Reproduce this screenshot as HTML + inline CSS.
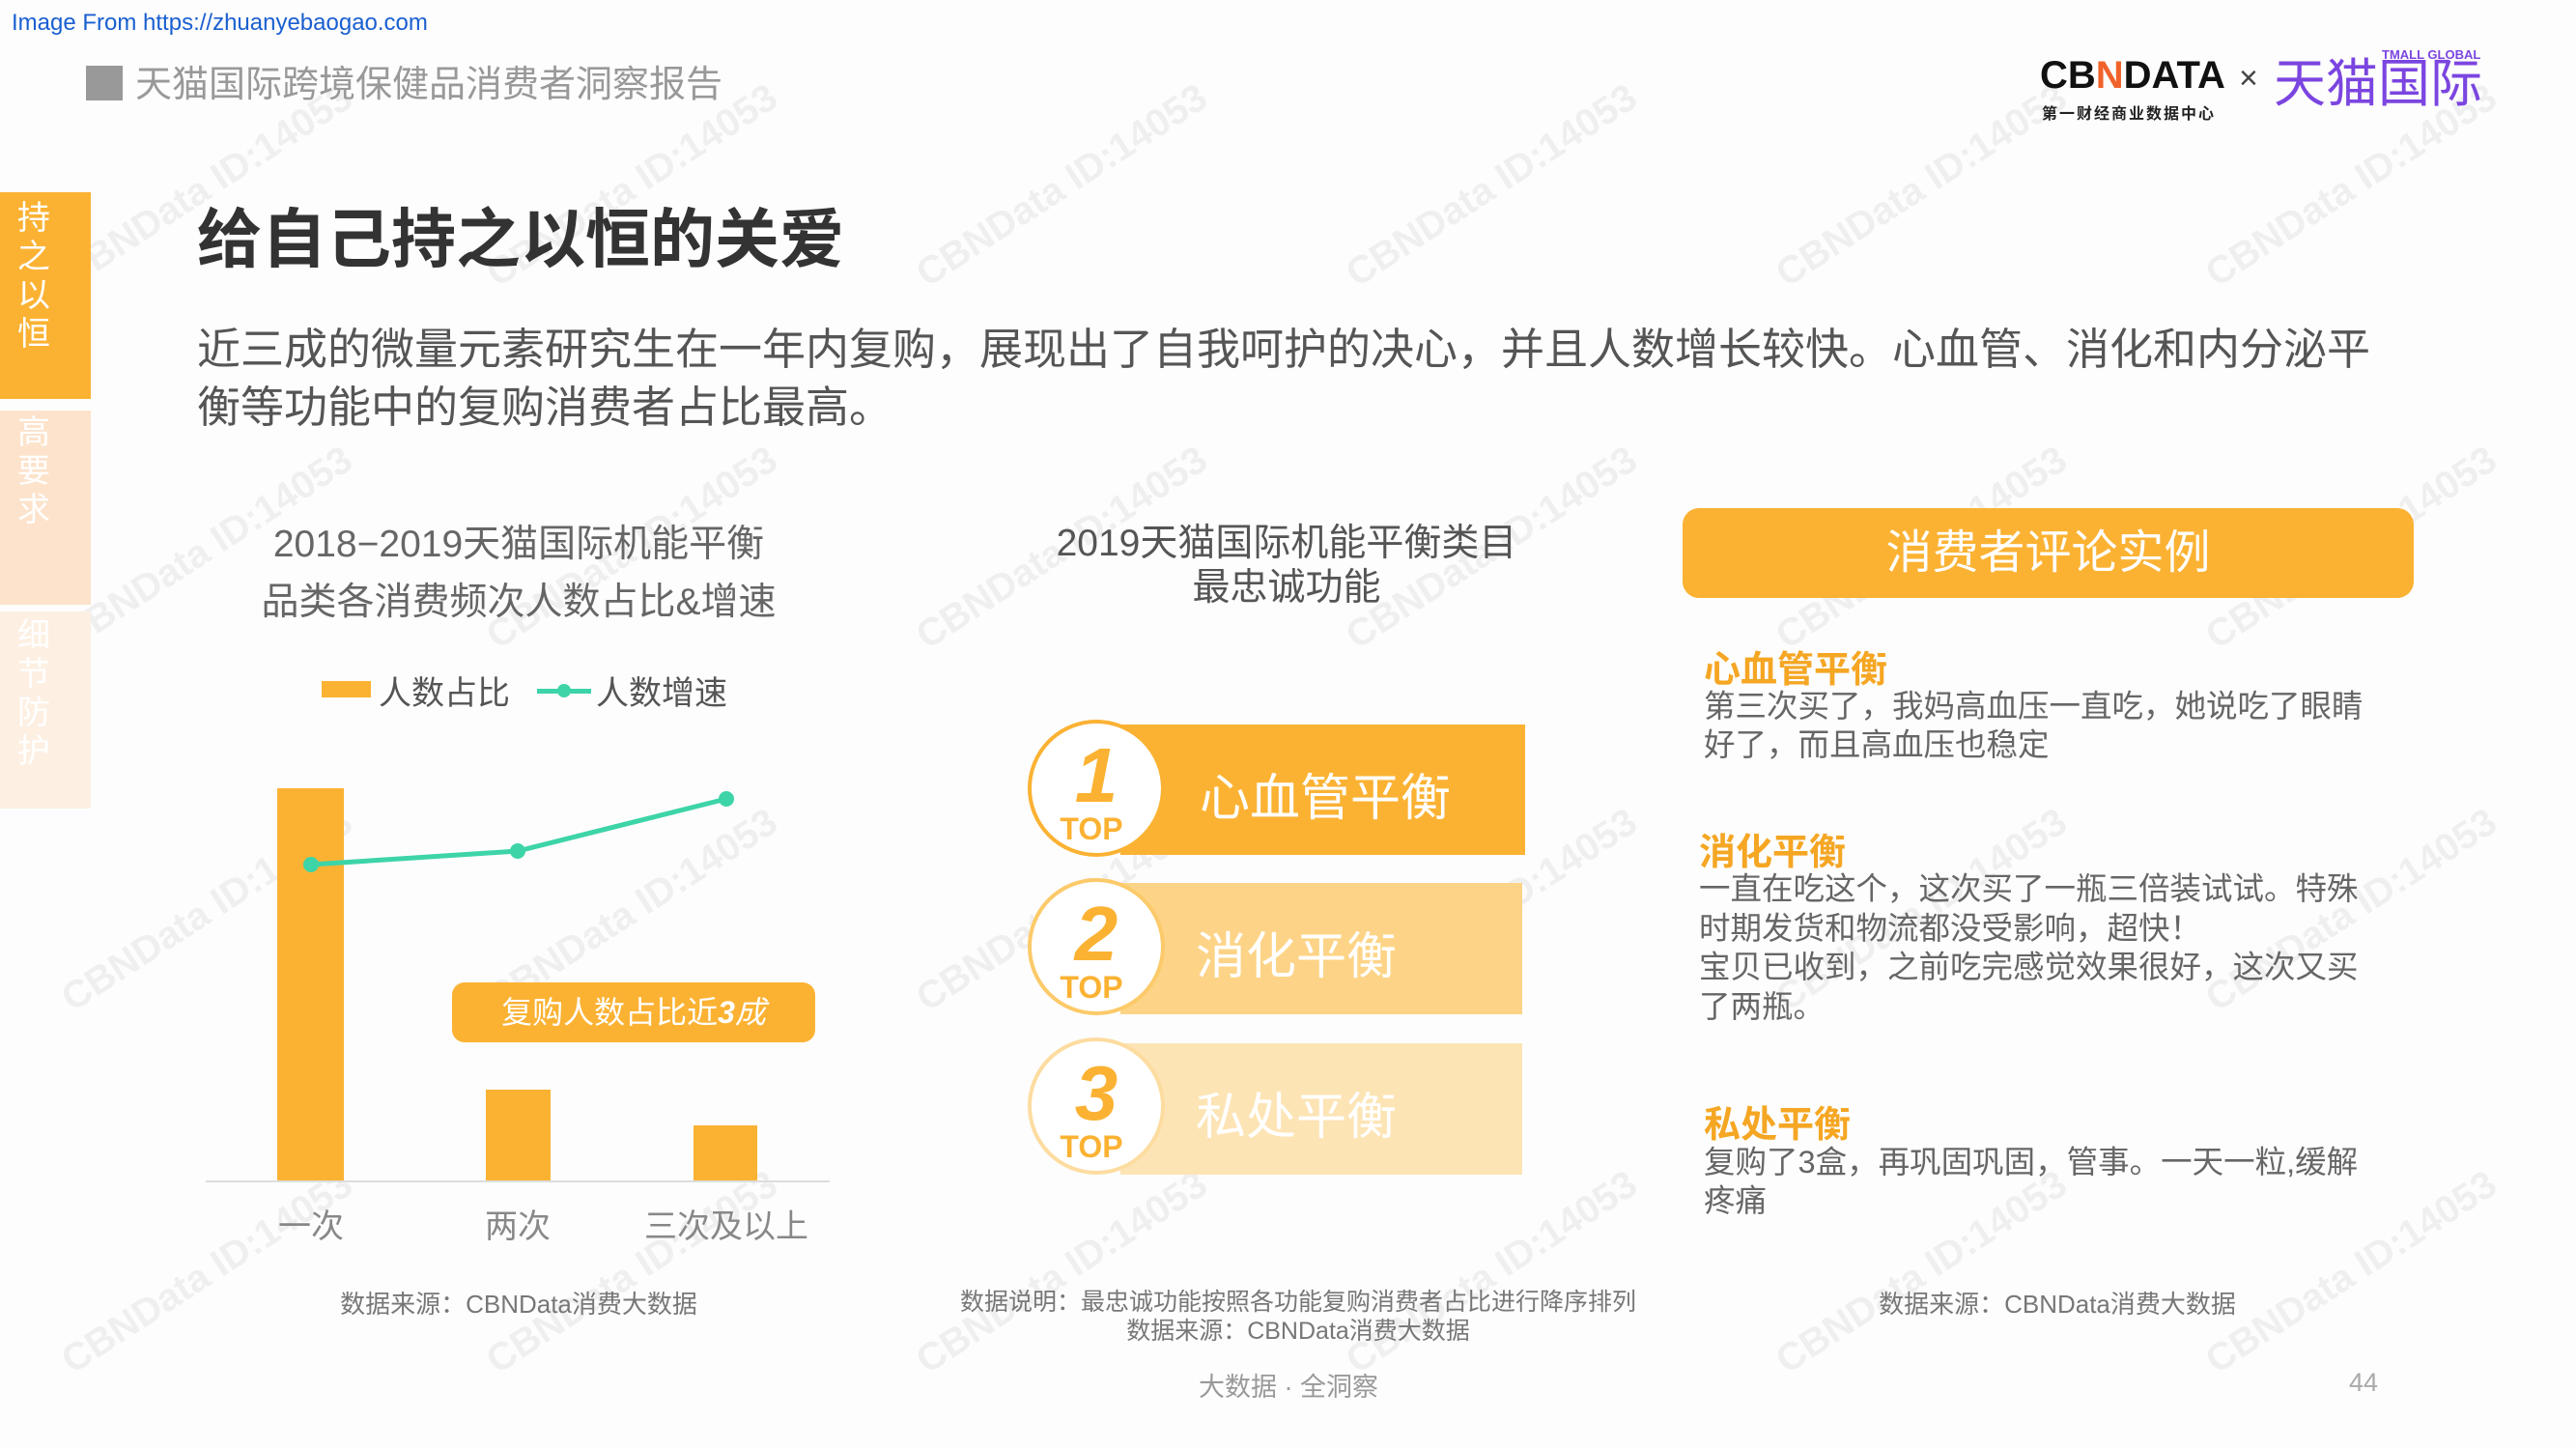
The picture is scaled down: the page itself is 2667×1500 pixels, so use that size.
<!DOCTYPE html>
<html><head><meta charset="utf-8"><style>
*{margin:0;padding:0;box-sizing:border-box}
body{width:2667px;height:1500px;background:#fdfdfd;position:relative;overflow:hidden;font-family:"Liberation Sans","Noto Sans CJK SC",sans-serif}
.a{position:absolute;white-space:nowrap}
.c{text-align:center}
.wm{position:absolute;color:rgba(0,0,0,0.055);font-size:40px;transform:rotate(-33deg);white-space:nowrap;font-weight:bold}
</style></head><body>
<div class="wm" style="left:40px;top:170px">CBNData ID:14053</div>
<div class="wm" style="left:480px;top:170px">CBNData ID:14053</div>
<div class="wm" style="left:925px;top:170px">CBNData ID:14053</div>
<div class="wm" style="left:1370px;top:170px">CBNData ID:14053</div>
<div class="wm" style="left:1815px;top:170px">CBNData ID:14053</div>
<div class="wm" style="left:2260px;top:170px">CBNData ID:14053</div>
<div class="wm" style="left:40px;top:545px">CBNData ID:14053</div>
<div class="wm" style="left:480px;top:545px">CBNData ID:14053</div>
<div class="wm" style="left:925px;top:545px">CBNData ID:14053</div>
<div class="wm" style="left:1370px;top:545px">CBNData ID:14053</div>
<div class="wm" style="left:1815px;top:545px">CBNData ID:14053</div>
<div class="wm" style="left:2260px;top:545px">CBNData ID:14053</div>
<div class="wm" style="left:40px;top:920px">CBNData ID:14053</div>
<div class="wm" style="left:480px;top:920px">CBNData ID:14053</div>
<div class="wm" style="left:925px;top:920px">CBNData ID:14053</div>
<div class="wm" style="left:1370px;top:920px">CBNData ID:14053</div>
<div class="wm" style="left:1815px;top:920px">CBNData ID:14053</div>
<div class="wm" style="left:2260px;top:920px">CBNData ID:14053</div>
<div class="wm" style="left:40px;top:1295px">CBNData ID:14053</div>
<div class="wm" style="left:480px;top:1295px">CBNData ID:14053</div>
<div class="wm" style="left:925px;top:1295px">CBNData ID:14053</div>
<div class="wm" style="left:1370px;top:1295px">CBNData ID:14053</div>
<div class="wm" style="left:1815px;top:1295px">CBNData ID:14053</div>
<div class="wm" style="left:2260px;top:1295px">CBNData ID:14053</div>

<div class="a" style="left:12px;top:10px;font-size:24px;color:#1a5fd0">Image From https://zhuanyebaogao.com</div>
<div class="a" style="left:89px;top:68px;width:38px;height:36px;background:#999"></div>
<div class="a" style="left:140px;top:56px;font-size:38px;color:#999">天猫国际跨境保健品消费者洞察报告</div>

<div class="a" style="left:2112px;top:56px;font-size:40px;font-weight:bold;color:#111;letter-spacing:0px">CB<span style="color:#f0622a">N</span>DATA</div>
<div class="a" style="left:2114px;top:104px;font-size:16px;color:#222;letter-spacing:2px;font-weight:bold">第一财经商业数据中心</div>
<div class="a" style="left:2318px;top:62px;font-size:34px;color:#444">×</div>
<div class="a" style="left:2466px;top:49px;font-size:13px;color:#7b45e0;font-weight:bold">TMALL GLOBAL</div>
<div class="a" style="left:2354px;top:56px;font-size:54px;color:#7b45e0;line-height:62px">天猫国际</div>

<div class="a" style="left:0;top:199px;width:94px;height:214px;background:#fbb233"></div>
<div class="a" style="left:18px;top:206px;width:40px;font-size:34px;line-height:40px;color:#fff;white-space:normal">持之以恒</div>
<div class="a" style="left:0;top:425px;width:94px;height:201px;background:#fde3cb"></div>
<div class="a" style="left:18px;top:428px;width:40px;font-size:34px;line-height:40px;color:#fff;white-space:normal">高要求</div>
<div class="a" style="left:0;top:633px;width:94px;height:204px;background:#fdf0e3"></div>
<div class="a" style="left:18px;top:638px;width:40px;font-size:34px;line-height:40px;color:#fff;white-space:normal">细节防护</div>

<div class="a" style="left:204px;top:194px;font-size:67px;font-weight:bold;color:#333">给自己持之以恒的关爱</div>
<div class="a" style="left:204px;top:332px;font-size:45px;line-height:60px;color:#555;white-space:normal;width:2400px">近三成的微量元素研究生在一年内复购，展现出了自我呵护的决心，并且人数增长较快。心血管、消化和内分泌平<br>衡等功能中的复购消费者占比最高。</div>

<div class="a c" style="left:237px;width:600px;top:534px;font-size:39px;line-height:60px;color:#666">2018−2019天猫国际机能平衡<br>品类各消费频次人数占比&amp;增速</div>
<div class="a" style="left:333px;top:705px;width:51px;height:17px;background:#fbb233"></div>
<div class="a" style="left:392px;top:690px;font-size:34px;color:#555">人数占比</div>
<div class="a" style="left:556px;top:713px;width:56px;height:5px;background:#3dd4a8"></div>
<div class="a" style="left:577px;top:708px;width:14px;height:14px;border-radius:50%;background:#3dd4a8"></div>
<div class="a" style="left:617px;top:690px;font-size:34px;color:#555">人数增速</div>
<div class="a" style="left:287px;top:816px;width:69px;height:406px;background:#fbb233"></div>
<div class="a" style="left:503px;top:1128px;width:67px;height:94px;background:#fbb233"></div>
<div class="a" style="left:718px;top:1165px;width:66px;height:57px;background:#fbb233"></div>
<div class="a" style="left:213px;top:1222px;width:646px;height:2px;background:#ddd"></div>
<svg class="a" style="left:0;top:0" width="900" height="1300"><polyline points="322,895 536,881 752,827" fill="none" stroke="#3dd4a8" stroke-width="5"/><circle cx="322" cy="895" r="8" fill="#3dd4a8"/><circle cx="536" cy="881" r="8" fill="#3dd4a8"/><circle cx="752" cy="827" r="8" fill="#3dd4a8"/></svg>
<div class="a c" style="left:468px;top:1017px;width:376px;height:62px;border-radius:13px;background:#fbb233;color:#fff;font-size:32px;line-height:62px">复购人数占比近<b><i>3</i></b><i>成</i></div>
<div class="a c" style="left:222px;width:200px;top:1242px;font-size:34px;color:#888">一次</div>
<div class="a c" style="left:436px;width:200px;top:1242px;font-size:34px;color:#888">两次</div>
<div class="a c" style="left:652px;width:200px;top:1242px;font-size:34px;color:#888">三次及以上</div>
<div class="a c" style="left:237px;width:600px;top:1330px;font-size:26px;color:#777">数据来源：CBNData消费大数据</div>

<div class="a c" style="left:1032px;width:600px;top:540px;font-size:39px;line-height:46px;color:#555">2019天猫国际机能平衡类目<br>最忠诚功能</div>
<div class="a" style="left:1160px;top:750px;width:419px;height:135px;background:#fbb233"></div>
<div class="a" style="left:1160px;top:914px;width:416px;height:136px;background:#fdd487"></div>
<div class="a" style="left:1160px;top:1080px;width:416px;height:136px;background:#fde4b5"></div>
<div class="a" style="left:1064px;top:745px;width:142px;height:142px;border-radius:50%;background:#fff;border:4px solid #fbb233"></div>
<div class="a" style="left:1064px;top:909px;width:142px;height:142px;border-radius:50%;background:#fff;border:4px solid #fcca6a"></div>
<div class="a" style="left:1064px;top:1074px;width:142px;height:142px;border-radius:50%;background:#fff;border:4px solid #fddca0"></div>
<div class="a c" style="left:1090px;width:90px;top:758px;font-size:80px;font-weight:bold;font-style:italic;color:#fbb233;line-height:90px">1</div>
<div class="a c" style="left:1080px;width:100px;top:840px;font-size:32px;font-weight:bold;color:#fbb233">TOP</div>
<div class="a c" style="left:1090px;width:90px;top:922px;font-size:80px;font-weight:bold;font-style:italic;color:#fbb233;line-height:90px">2</div>
<div class="a c" style="left:1080px;width:100px;top:1004px;font-size:32px;font-weight:bold;color:#fbb233">TOP</div>
<div class="a c" style="left:1090px;width:90px;top:1087px;font-size:80px;font-weight:bold;font-style:italic;color:#fbb233;line-height:90px">3</div>
<div class="a c" style="left:1080px;width:100px;top:1169px;font-size:32px;font-weight:bold;color:#fbb233">TOP</div>
<div class="a" style="left:1242px;top:784px;font-size:52px;color:#fff">心血管平衡</div>
<div class="a" style="left:1238px;top:948px;font-size:52px;color:#fff">消化平衡</div>
<div class="a" style="left:1238px;top:1114px;font-size:52px;color:#fff">私处平衡</div>
<div class="a c" style="left:944px;width:800px;top:1333px;font-size:25px;line-height:30px;color:#777">数据说明：最忠诚功能按照各功能复购消费者占比进行降序排列<br>数据来源：CBNData消费大数据</div>

<div class="a c" style="left:1742px;top:526px;width:757px;height:93px;border-radius:17px;background:#fbb233;color:#fff;font-size:48px;line-height:93px">消费者评论实例</div>
<div class="a" style="left:1764px;top:662px;font-size:38px;font-weight:bold;color:#f5a623">心血管平衡</div>
<div class="a" style="left:1764px;top:711px;font-size:32.5px;line-height:40px;color:#666">第三次买了，我妈高血压一直吃，她说吃了眼睛<br>好了，而且高血压也稳定</div>
<div class="a" style="left:1759px;top:851px;font-size:38px;font-weight:bold;color:#f5a623">消化平衡</div>
<div class="a" style="left:1759px;top:900px;font-size:32.5px;line-height:40.5px;color:#666">一直在吃这个，这次买了一瓶三倍装试试。特殊<br>时期发货和物流都没受影响，超快！<br>宝贝已收到，之前吃完感觉效果很好，这次又买<br>了两瓶。</div>
<div class="a" style="left:1764px;top:1133px;font-size:38px;font-weight:bold;color:#f5a623">私处平衡</div>
<div class="a" style="left:1764px;top:1183px;font-size:32.5px;line-height:40px;color:#666">复购了3盒，再巩固巩固，管事。一天一粒,缓解<br>疼痛</div>
<div class="a c" style="left:1830px;width:600px;top:1330px;font-size:26px;color:#777">数据来源：CBNData消费大数据</div>

<div class="a c" style="left:1134px;width:400px;top:1414px;font-size:27px;color:#999">大数据 · 全洞察</div>
<div class="a" style="left:2432px;top:1416px;font-size:27px;color:#aaa">44</div>
</body></html>
